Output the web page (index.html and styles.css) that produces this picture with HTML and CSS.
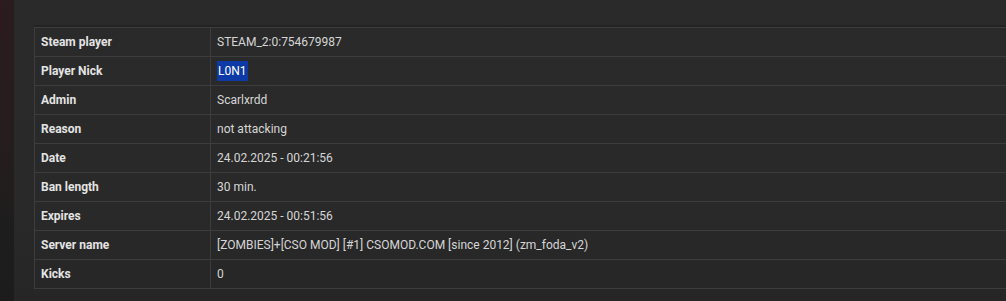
FILE: index.html
```html
<!DOCTYPE html>
<html>
<head>
<meta charset="utf-8">
<link rel="stylesheet" href="styles.css">
</head>
<body>
<div class="page">
  <div class="side"></div>
  <div class="panel">
    <table class="info">
      <tr><th>Steam player</th><td>STEAM_2:0:754679987</td></tr>
      <tr><th>Player Nick</th><td><span class="sel">L0N1</span></td></tr>
      <tr><th>Admin</th><td>Scarlxrdd</td></tr>
      <tr><th>Reason</th><td>not attacking</td></tr>
      <tr><th>Date</th><td>24.02.2025 - 00:21:56</td></tr>
      <tr><th>Ban length</th><td>30 min.</td></tr>
      <tr><th>Expires</th><td>24.02.2025 - 00:51:56</td></tr>
      <tr><th>Server name</th><td>[ZOMBIES]+[CSO MOD] [#1] CSOMOD.COM [since 2012] (zm_foda_v2)</td></tr>
      <tr><th>Kicks</th><td>0</td></tr>
    </table>
  </div>
</div>
</body>
</html>
```

FILE: styles.css
```css
html, body {
  margin: 0;
  padding: 0;
  background: #2a2a2a;
  overflow: hidden;
}
.page {
  display: flex;
  width: 1006px;
  height: 301px;
  overflow: hidden;
}
.side {
  width: 14px;
  flex: none;
  background: linear-gradient(180deg, #2b1c1d 0%, #271d1e 40%, #1e1d1d 75%, #1c1c1c 100%);
}
.panel {
  flex: 1;
  background: linear-gradient(180deg, #2a2a2a 0%, #292929 70%, #262626 100%);
  padding: 27px 0 0 20px;
  overflow: hidden;
}
.info {
  border-collapse: collapse;
  width: 1100px;
  font-family: Roboto, "Liberation Sans", sans-serif;
  font-size: 12px;
  box-shadow: 0 -2px 0 #232323;
}
.info th, .info td {
  border: 1px solid #3d3d3d;
  height: 29px;
  padding: 0 6px;
  box-sizing: border-box;
  text-align: left;
  vertical-align: middle;
}
.info th {
  width: 176px;
  font-weight: 700;
  color: #e4e4e4;
}
.info td {
  color: #d6d6d6;
  font-weight: 400;
}
.sel {
  background: #0d3aa6;
  color: #ffffff;
  padding: 3px 1px;
}
```
